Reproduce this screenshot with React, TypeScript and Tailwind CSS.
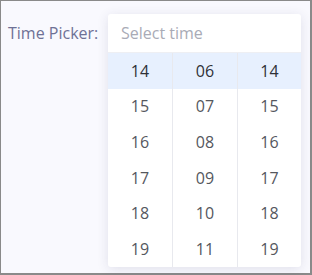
import React from "react";

const hours = ["14", "15", "16", "17", "18", "19"];
const minutes = ["06", "07", "08", "09", "10", "11"];

function Column({ items, first }: { items: string[]; first?: boolean }) {
  return (
    <div className={first ? "flex flex-col" : "flex flex-col border-l border-[#e8e9ee]"}>
      {items.map((v, i) => (
        <div
          key={v + i}
          className={
            i === 0
              ? "h-[35.6px] shrink-0 flex items-center justify-center bg-[#e7f0fe] text-[#2f3137]"
              : "h-[35.6px] shrink-0 flex items-center justify-center text-[#55575e]"
          }
        >
          {v}
        </div>
      ))}
    </div>
  );
}

export default function App() {
  return (
    <div
      className="w-[312px] h-[275px] bg-[#f9f9fe] border-l border-t border-r-2 border-b-2 border-[#8a8a8a] flex items-start"
      style={{ fontFamily: "'Open Sans', 'Noto Sans', sans-serif" }}
    >
      <div className="pl-[7px] pt-[22px] w-[107px] shrink-0 text-[16px] text-[#6e7196] leading-[20px]">
        Time Picker:
      </div>
      <div className="mt-[13px] w-[193px] h-[253px] bg-white rounded-[3px] overflow-hidden shadow-[0_2px_12px_rgba(40,40,90,0.12)] flex flex-col text-[16px]">
        <div className="h-[39px] shrink-0 border-b border-[#eeeff3] flex items-center pl-[13px] text-[#a9abb6]">
          Select time
        </div>
        <div className="grid grid-cols-[64px_65px_64px] flex-1">
          <Column items={hours} first />
          <Column items={minutes} />
          <Column items={hours} />
        </div>
      </div>
    </div>
  );
}
